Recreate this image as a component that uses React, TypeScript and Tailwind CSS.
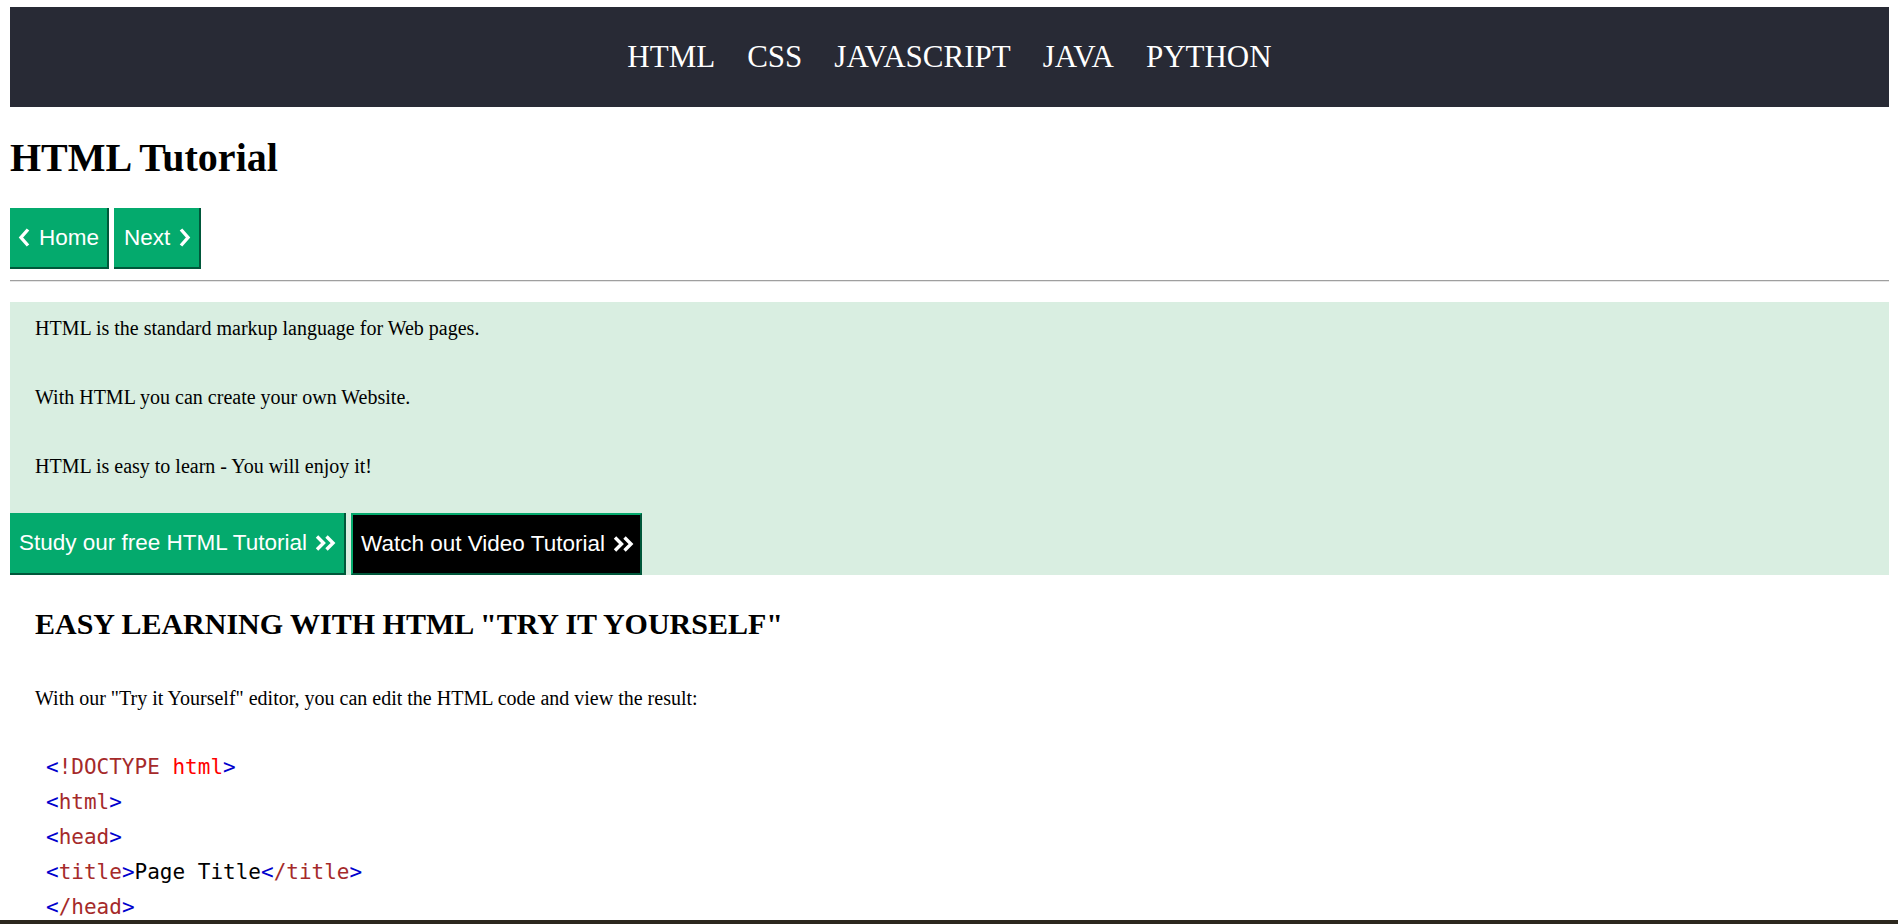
import React from 'react'

const serif = { fontFamily: '"Liberation Serif", "Times New Roman", serif' }
const sans = { fontFamily: '"Liberation Sans", Arial, sans-serif' }
const mono = { fontFamily: '"DejaVu Sans Mono", "Liberation Mono", monospace' }

function AngleLeft() {
  return (
    <svg width="12" height="19" viewBox="0 0 12 19" fill="none">
      <polyline points="10,1.5 3,9.5 10,17.5" stroke="white" strokeWidth="3.4" strokeLinejoin="miter" />
    </svg>
  )
}

function AngleRight() {
  return (
    <svg width="12" height="19" viewBox="0 0 12 19" fill="none">
      <polyline points="2,1.5 9,9.5 2,17.5" stroke="white" strokeWidth="3.4" strokeLinejoin="miter" />
    </svg>
  )
}

function AngleDouble() {
  return (
    <svg width="21" height="16" viewBox="0 0 21 16" fill="none">
      <polyline points="2,1.5 8.5,8 2,14.5" stroke="white" strokeWidth="3.4" />
      <polyline points="11.5,1.5 18,8 11.5,14.5" stroke="white" strokeWidth="3.4" />
    </svg>
  )
}

const B = ({ children }: { children: React.ReactNode }) => <span className="text-[#0000cd]">{children}</span>
const N = ({ children }: { children: React.ReactNode }) => <span className="text-[#a52a2a]">{children}</span>

const codeLines: React.ReactNode[] = [
  <><B>&lt;</B><N>!DOCTYPE</N> <span className="text-[#ff0000]">html</span><B>&gt;</B></>,
  <><B>&lt;</B><N>html</N><B>&gt;</B></>,
  <><B>&lt;</B><N>head</N><B>&gt;</B></>,
  <><B>&lt;</B><N>title</N><B>&gt;</B>Page Title<B>&lt;</B><N>/title</N><B>&gt;</B></>,
  <><B>&lt;</B><N>/head</N><B>&gt;</B></>,
  <><B>&lt;</B><N>body</N><B>&gt;</B></>,
  <><B>&lt;</B><N>h1</N><B>&gt;</B>This is a Heading<B>&lt;</B><N>/h1</N><B>&gt;</B></>,
  <><B>&lt;</B><N>p</N><B>&gt;</B>This is a paragraph.<B>&lt;</B><N>/p</N><B>&gt;</B></>,
  <><B>&lt;</B><N>/body</N><B>&gt;</B></>,
  <><B>&lt;</B><N>/html</N><B>&gt;</B></>,
]

export default function App() {
  return (
    <div className="min-h-screen bg-white pt-[7px] pl-[10px] pr-[9px] pb-10 text-black" style={serif}>
      <nav className="h-[100px] pb-[1px] bg-[#282A35] flex items-center justify-center gap-[32px] text-white text-[31px] leading-[36px]">
        <a>HTML</a>
        <a>CSS</a>
        <a>JAVASCRIPT</a>
        <a>JAVA</a>
        <a>PYTHON</a>
      </nav>

      <h1 className="mt-[28px] text-[40px] leading-[46px] font-bold">HTML Tutorial</h1>

      <div className="mt-[27px] flex gap-[5px] text-white text-[22.5px] leading-[26px]" style={sans}>
        <a className="h-[61px] flex items-center bg-[#04AA6D] pl-[8px] pr-[8px] border-r-2 border-b-2 border-[#00573a]">
          <AngleLeft />
          <span className="ml-[9px]">Home</span>
        </a>
        <a className="h-[61px] flex items-center bg-[#04AA6D] pl-[10px] pr-[8px] border-r-2 border-b-2 border-[#00573a]">
          <span>Next</span>
          <span className="ml-[9px] flex"><AngleRight /></span>
        </a>
      </div>

      <div className="mt-[11px] h-[2px] border-t border-b border-t-[#9f9f9f] border-b-[#e6e6e6]" />

      <div className="mt-[20px] bg-[#D9EEE1]">
        <div className="pl-[25px] pt-[15px] text-[20px] leading-[23px]">
          <p>HTML is the standard markup language for Web pages.</p>
          <p className="mt-[46px]">With HTML you can create your own Website.</p>
          <p className="mt-[46px]">HTML is easy to learn - You will enjoy it!</p>
        </div>
        <div className="mt-[35px] flex gap-[5px] text-white text-[22.5px] leading-[26px]" style={sans}>
          <a className="h-[62px] flex items-center bg-[#04AA6D] pl-[9px] pr-[8px] border-r-2 border-b-2 border-[#00573a]">
            <span>Study our free HTML Tutorial</span>
            <span className="ml-[8px] flex"><AngleDouble /></span>
          </a>
          <a className="h-[62px] flex items-center bg-black pl-[8px] pr-[6px] border-2 border-t-[#04AA6D] border-l-[#04AA6D] border-r-[#00573a] border-b-[#00573a]">
            <span>Watch out Video Tutorial</span>
            <span className="ml-[8px] flex"><AngleDouble /></span>
          </a>
        </div>
      </div>

      <div className="pl-[25px]">
        <h2 className="mt-[31px] text-[30px] leading-[35px] font-bold">EASY LEARNING WITH HTML "TRY IT YOURSELF"</h2>
        <p className="mt-[46px] text-[20px] leading-[23px]">
          With our "Try it Yourself" editor, you can edit the HTML code and view the result:
        </p>
        <div className="mt-[40px] pl-[11px] text-[21px] leading-[35px] text-black" style={mono}>
          {codeLines.map((line, i) => (
            <div key={i}>{line}</div>
          ))}
        </div>
      </div>

      <div className="fixed left-0 right-0 bottom-0 h-[4px] bg-[#2c271e]" />
    </div>
  )
}
